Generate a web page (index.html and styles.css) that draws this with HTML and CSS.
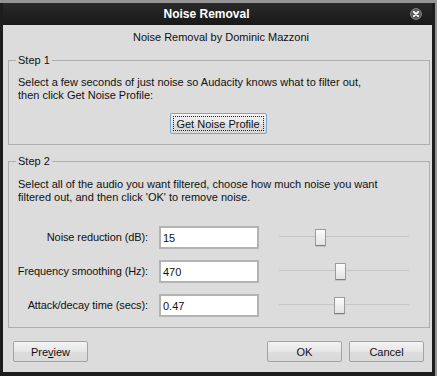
FILE: index.html
```html
<!DOCTYPE html>
<html lang="en">
<head>
  <meta charset="UTF-8" />
  <title>Noise Removal</title>
  <link rel="stylesheet" href="styles.css">
</head>
<body>
<div class="window">
  <div class="titlebar">
    <span class="title">Noise Removal</span>
    <span class="close">
      <svg width="12" height="12" viewBox="0 0 12 12">
        <circle cx="6" cy="6" r="5.5" fill="#5e5e5e" stroke="#7a7a7a" stroke-width="1"/>
        <path d="M3.8 3.8 L8.2 8.2 M8.2 3.8 L3.8 8.2" stroke="#fff" stroke-width="1.8" stroke-linecap="round"/>
      </svg>
    </span>
  </div>

  <div class="content">
    <div class="credit">Noise Removal by Dominic Mazzoni</div>

    <fieldset class="group step1">
      <legend>Step 1</legend>
      <p>Select a few seconds of just noise so Audacity knows what to filter out,<br>then click Get Noise Profile:</p>
      <div class="center">
        <button type="button" class="btn focused"><span>Get Noise Profile</span></button>
      </div>
    </fieldset>

    <fieldset class="group step2">
      <legend>Step 2</legend>
      <p>Select all of the audio you want filtered, choose how much noise you want<br>filtered out, and then click 'OK' to remove noise.</p>
      <div class="rows">
        <label class="row-label">Noise reduction (dB):</label>
        <input class="field" type="text" value="15">
        <div class="slider"><div class="track"></div><div class="thumb" style="left: 36px"></div></div>

        <label class="row-label">Frequency smoothing (Hz):</label>
        <input class="field" type="text" value="470">
        <div class="slider"><div class="track"></div><div class="thumb" style="left: 56px"></div></div>

        <label class="row-label">Attack/decay time (secs):</label>
        <input class="field" type="text" value="0.47">
        <div class="slider"><div class="track"></div><div class="thumb" style="left: 55px"></div></div>
      </div>
    </fieldset>

    <div class="actions">
      <button type="button" class="btn">Pre<u>v</u>iew</button>
      <div class="spacer"></div>
      <button type="button" class="btn">OK</button>
      <button type="button" class="btn">Cancel</button>
    </div>
  </div>
</div>
</body>
</html>
```

FILE: styles.css
```css
* {
  box-sizing: border-box;
}

body {
  margin: 0;
  background-color: #959595;
  font-family: 'Liberation Sans', Arial, sans-serif;
  font-size: 11px;
  line-height: 13px;
  color: #111;
  height: 376px;
  overflow: hidden;
}

.window {
  margin-top: 3px;
  width: 435px;
  height: 373px;
  background: #1d1d1d;
  border-left: 3px solid #1d1d1d;
  border-right: 3px solid #1d1d1d;
  border-bottom: 4px solid #1d1d1d;
  display: flex;
  flex-direction: column;
}

.titlebar {
  height: 22px;
  display: flex;
  align-items: center;
  background: linear-gradient(#2a2a2a, #191919);
}

.title {
  flex: 1;
  text-align: center;
  color: #fff;
  font-weight: bold;
  font-size: 12px;
  padding-left: 2px;
}

.close {
  width: 24px;
  height: 22px;
  display: flex;
  align-items: center;
  justify-content: flex-start;
  padding-left: 2px;
}

.content {
  flex: 1;
  background: #dcdcdc;
  padding: 6px 2px 0 5px;
  display: flex;
  flex-direction: column;
}

.credit {
  text-align: center;
  padding-left: 4px;
}

.group {
  margin: 10px 0 0 0;
  padding: 0 9px 10px 9px;
  border: 1px solid #aeaeae;
  min-inline-size: 0;
}

.group legend {
  padding: 0 2px;
  margin-left: -2px;
  line-height: 13px;
}

.group p {
  margin: 0;
}

.step1 p {
  padding-top: 9px;
}

.step2 p {
  padding-top: 10px;
}

.center {
  display: flex;
  justify-content: center;
  margin-top: 11px;
  padding-right: 2px;
}

.btn {
  height: 21px;
  width: 75px;
  font-family: inherit;
  font-size: 11px;
  color: #111;
  background: linear-gradient(#f3f3f3, #e6e6e6 50%, #dddddd 51%, #d9d9d9);
  border: 1px solid #a3a3a3;
  border-radius: 2px;
  padding: 0;
}

.btn u {
  text-decoration: underline;
}

.focused {
  width: 97px;
  border-color: #7aa7cf;
  padding: 2px;
}

.focused span {
  display: block;
  height: 100%;
  border: 1px dotted #222;
  line-height: 13px;
  padding-top: 1px;
}

.rows {
  margin-top: 22px;
  display: grid;
  grid-template-columns: 130px 100px 1fr;
  column-gap: 11px;
  row-gap: 11px;
  align-items: center;
}

.row-label {
  justify-self: end;
  white-space: nowrap;
  letter-spacing: -0.1px;
}

.field {
  width: 100px;
  height: 23px;
  border: 2px solid #b3b3b3;
  background: #fff;
  font-family: inherit;
  font-size: 11px;
  padding: 0 2px;
  color: #111;
}

.slider {
  position: relative;
  height: 23px;
  margin: 0 11px 0 9px;
}

.track {
  position: absolute;
  left: 0;
  right: 0;
  top: 10px;
  height: 1px;
  background: #b5b5b5;
  border-bottom: 1px solid #c6c6c6;
}

.thumb {
  position: absolute;
  top: 3px;
  width: 11px;
  height: 17px;
  background: linear-gradient(#fcfcfc, #e3e3e3);
  border: 1px solid #9a9a9a;
  border-bottom-color: #7d7d7d;
  border-radius: 1px;
  box-shadow: 0 1px 0 #c4c4c4;
}

.actions {
  display: flex;
  margin-top: 13px;
  padding: 0 6px 0 5px;
  gap: 7px;
}

.spacer {
  flex: 1;
}
```
